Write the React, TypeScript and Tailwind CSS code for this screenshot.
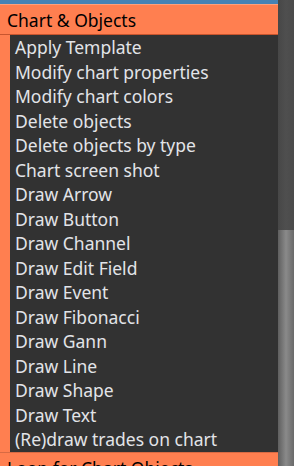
const items = [
  "Apply Template",
  "Modify chart properties",
  "Modify chart colors",
  "Delete objects",
  "Delete objects by type",
  "Chart screen shot",
  "Draw Arrow",
  "Draw Button",
  "Draw Channel",
  "Draw Edit Field",
  "Draw Event",
  "Draw Fibonacci",
  "Draw Gann",
  "Draw Line",
  "Draw Shape",
  "Draw Text",
  "(Re)draw trades on chart",
];

export default function App() {
  return (
    <div className="flex w-[294px] h-[466px] overflow-hidden bg-[#323232] font-['Noto_Sans','Open_Sans',sans-serif]">
      <div className="flex flex-col w-[278px]">
        <div className="h-[4px] bg-[#4682b4] shrink-0" />
        <div className="h-[1px] bg-[#ffa07a] shrink-0" />
        <div className="h-[30px] shrink-0 bg-[#ff7f50] px-[7px] text-[17.5px] leading-[30px] text-black border-b border-[#c8552e]">
          Chart &amp; Objects
        </div>
        <div className="flex shrink-0">
          <div className="w-[10px] bg-[#ff7f50]" />
          <div className="flex-1 flex flex-col bg-[#323232]">
            {items.map((t) => (
              <div
                key={t}
                className="h-[24.5px] leading-[24.5px] pl-[5px] text-[17.5px] text-[#e2e4e8] whitespace-nowrap"
              >
                {t}
              </div>
            ))}
          </div>
        </div>
        <div className="h-[1px] bg-[#d86a43] shrink-0" />
        <div className="h-[30px] shrink-0 bg-[#ff7f50] px-[7px] text-[17.5px] leading-[30px] text-black whitespace-nowrap">
          Loop for Chart Objects
        </div>
      </div>
      <div className="w-[16px] flex flex-col bg-[#4a4a4a]">
        <div className="h-[230px] shrink-0 bg-gradient-to-r from-[#474747] via-[#4f4f4f] to-[#4a4a4a]" />
        <div className="flex-1 bg-gradient-to-r from-[#5f5f5f] via-[#8a8a8a] to-[#6a6a6a]" />
      </div>
    </div>
  );
}
